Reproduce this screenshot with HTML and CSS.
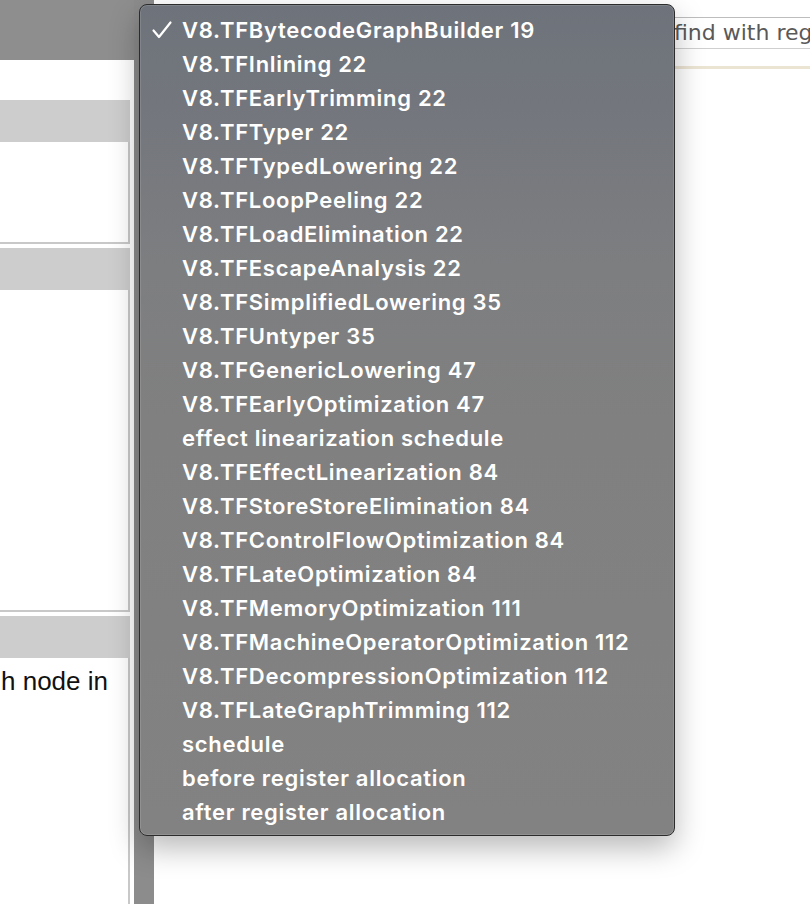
FILE: index.html
```html
<!DOCTYPE html>
<html>
<head>
<meta charset="utf-8">
<link rel="stylesheet" href="styles.css">
</head>
<body>
<div class="app">
  <div class="left">
    <div class="topbar"></div>
    <div class="spacer"></div>
    <div class="panel p1">
      <div class="phead"></div>
      <div class="pbody"></div>
    </div>
    <div class="panel p2">
      <div class="phead"></div>
      <div class="pbody"></div>
    </div>
    <div class="panel p3">
      <div class="phead"></div>
      <div class="pbody"><p class="info">h node in</p></div>
    </div>
  </div>
  <div class="splitter"></div>
  <div class="right">
    <div class="toolbar">
      <div class="select-slot"></div>
      <div class="search">find with regexp</div>
    </div>
    <div class="rule"></div>
  </div>
</div>
<div class="menu">
  <div class="item checked"><svg class="check" width="22" height="20" viewBox="0 0 22 20"><path d="M2.5 10.5 L8 17 L19.5 2.5" fill="none" stroke="#fff" stroke-width="2.2" stroke-linecap="round" stroke-linejoin="round"/></svg>V8.TFBytecodeGraphBuilder 19</div>
  <div class="item">V8.TFInlining 22</div>
  <div class="item">V8.TFEarlyTrimming 22</div>
  <div class="item">V8.TFTyper 22</div>
  <div class="item">V8.TFTypedLowering 22</div>
  <div class="item">V8.TFLoopPeeling 22</div>
  <div class="item">V8.TFLoadElimination 22</div>
  <div class="item">V8.TFEscapeAnalysis 22</div>
  <div class="item">V8.TFSimplifiedLowering 35</div>
  <div class="item">V8.TFUntyper 35</div>
  <div class="item">V8.TFGenericLowering 47</div>
  <div class="item">V8.TFEarlyOptimization 47</div>
  <div class="item">effect linearization schedule</div>
  <div class="item">V8.TFEffectLinearization 84</div>
  <div class="item">V8.TFStoreStoreElimination 84</div>
  <div class="item">V8.TFControlFlowOptimization 84</div>
  <div class="item">V8.TFLateOptimization 84</div>
  <div class="item">V8.TFMemoryOptimization 111</div>
  <div class="item">V8.TFMachineOperatorOptimization 112</div>
  <div class="item">V8.TFDecompressionOptimization 112</div>
  <div class="item">V8.TFLateGraphTrimming 112</div>
  <div class="item">schedule</div>
  <div class="item">before register allocation</div>
  <div class="item">after register allocation</div>
</div>
</body>
</html>
```
FILE: styles.css
```css
html, body {
  margin: 0;
  padding: 0;
  height: 904px;
  overflow: hidden;
  background: #fff;
  font-family: "Liberation Sans", Arial, sans-serif;
}
.app {
  display: flex;
  height: 904px;
}
.left {
  width: 134px;
  flex: none;
  display: flex;
  flex-direction: column;
  background: #fff;
}
.topbar {
  height: 60px;
  background: #8e8e8e;
}
.spacer {
  height: 40px;
}
.panel {
  width: 130px;
  display: flex;
  flex-direction: column;
  margin-bottom: 4px;
}
.phead {
  height: 42px;
  background: #cdcdcd;
}
.pbody {
  border-right: 2px solid #c8c8c8;
  border-bottom: 2px solid #c8c8c8;
  background: #fff;
}
.p1 .pbody { height: 100px; }
.p2 .pbody { height: 320px; }
.p3 { flex: 1; margin-bottom: 0; }
.p3 .pbody { flex: 1; border-bottom: none; }
.info {
  margin: 9px 0 0 1px;
  font-size: 26px;
  line-height: 29px;
  color: #111;
  white-space: nowrap;
}
.splitter {
  width: 20px;
  flex: none;
  background: #8c8c8c;
}
.right {
  flex: 1;
  background: #fff;
  display: flex;
  flex-direction: column;
}
.toolbar {
  display: flex;
  padding-top: 17px;
  height: 32px;
}
.select-slot {
  width: 514px;
  flex: none;
}
.search {
  flex: 1;
  box-sizing: border-box;
  height: 32px;
  border-top: 1px solid #bdbdbd;
  border-bottom: 1px solid #cfcfcf;
  padding-left: 6px;
  font-family: "DejaVu Sans", Verdana, sans-serif;
  font-size: 22px;
  line-height: 30px;
  color: #595959;
  white-space: nowrap;
  overflow: hidden;
}
.rule {
  margin-top: 17px;
  height: 3px;
  background: #ece4d3;
}
.menu {
  position: absolute;
  left: 139px;
  top: 4px;
  width: 536px;
  height: 832px;
  box-sizing: border-box;
  padding-top: 8px;
  border: 1px solid #2c2c2c;
  border-radius: 8px;
  background: linear-gradient(#6e737b 0, #74777d 120px, #7d7e80 260px, #808080 420px, #828282 100%);
  box-shadow: inset 0 0 0 1px rgba(255,255,255,0.12), 0 12px 30px rgba(0,0,0,0.28);
  font-family: Inter, "Open Sans", sans-serif;
  font-weight: 600;
  font-size: 22px;
  letter-spacing: 0.7px;
  color: #fff;
}
.item {
  height: 34px;
  line-height: 34px;
  padding-left: 42px;
  position: relative;
  white-space: nowrap;
}
.check {
  position: absolute;
  left: 11px;
  top: 7px;
}
```
